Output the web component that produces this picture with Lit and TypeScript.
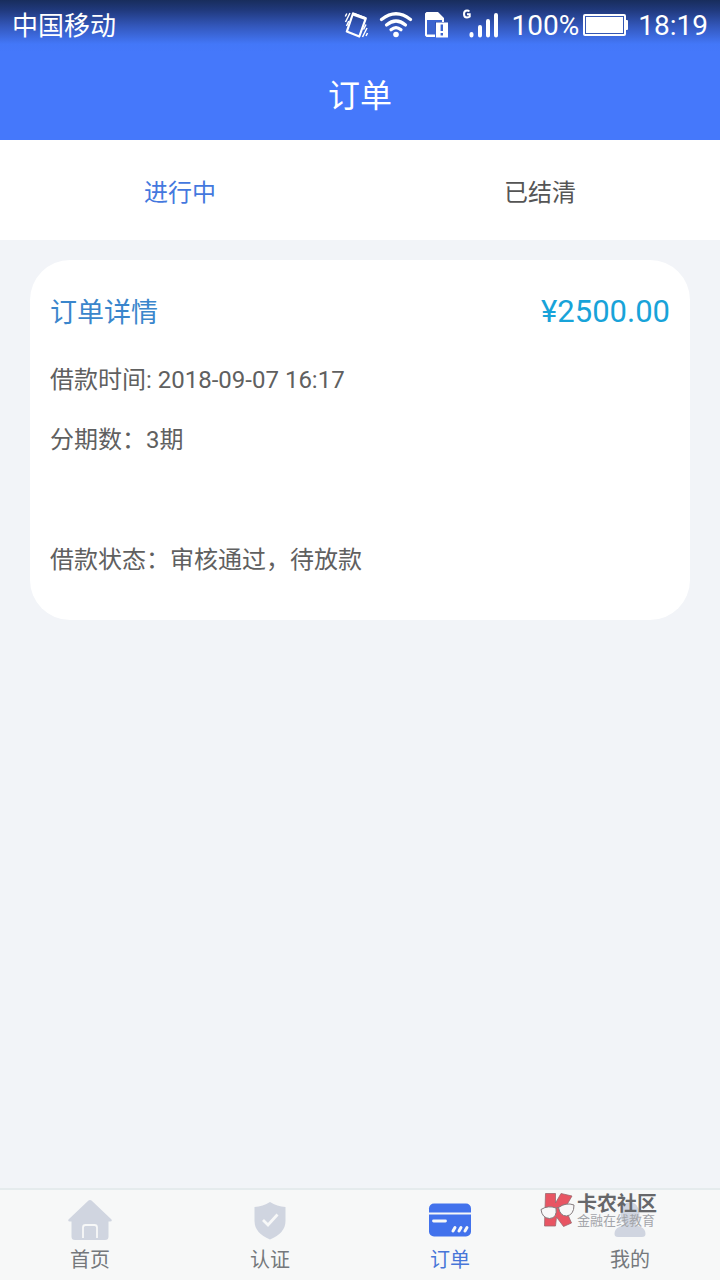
import { LitElement, html, css, svg } from "lit";
import { customElement, state } from "lit/decorators.js";

@customElement("status-bar")
class StatusBar extends LitElement {
  static styles = css`
    :host { display: block; }
    .bar {
      display: flex; align-items: center; justify-content: space-between;
      height: 52px; padding: 0 12px; color: #fff;
      background: linear-gradient(#182d5c 0, #20397c 10px, #3357bb 26px, #4377f8 44px, #4578fb 52px);
    }
    .carrier { font-size: 26px; line-height: 52px; }
    .right { display: flex; align-items: center; font-size: 28px; line-height: 52px; }
    svg { display: block; }
    .battery { margin: 0 9px 0 4px; }
    .icons { margin-right: 13px; }
  `;
  render() {
    return html`
      <div class="bar">
        <span class="carrier">中国移动</span>
        <div class="right">
          <svg class="icons" width="156" height="40" viewBox="343 6 156 40" fill="none" stroke="#fff" aria-hidden="true">
            <path d="M353 13.500L365.800 18.300L359.300 36.500L346.800 31.600Z" stroke-width="2.200" stroke-linejoin="round"/>
            <path d="M353 14L365.500 18.700" stroke-width="3"/>
            <path d="M345.300 16.500l1.500-3M345.500 22l4.500-9M346.500 26l2.300-5M366 36l1.500-3M362.500 37l4.500-9M363.500 29.500l2.500-5" stroke-width="1.500"/>
            <g stroke-width="3.200" stroke-linecap="round">
              <path d="M381.500 19.500Q396 8 410.500 19.500"/>
              <path d="M386.500 25Q396 17 405.500 25"/>
              <path d="M391 29.800Q396 25.500 401 29.800"/>
            </g>
            <circle cx="396" cy="34.500" r="2.800" fill="#fff" stroke="none"/>
            <path d="M425 13.500L426.500 12H438L444 18V22H435V37H426.500L425 35.500Z" fill="#fff" stroke="none"/>
            <path d="M427 20H442V22H435V34.500H427Z" fill="#3b64cf" stroke="none"/>
            <path d="M436 22.500H448V37.500H436Z" fill="#fff" stroke="none"/>
            <path d="M441.800 24.500V31M441.800 33V35.500" stroke="#3b64cf" stroke-width="2.400"/>
            <path d="M469.300 11.500Q468.500 10.500 467 10.500Q464 10.500 464 14Q464 17.500 467 17.500Q469 17.500 469.700 16.700V14.300H467" stroke-width="2"/>
            <g stroke-width="4" stroke-linecap="round">
              <path d="M471.500 34v1.500M480 27v8.500M488 21v14.500M496 15v20.500"/>
            </g>
          </svg>
          <span>100%</span>
          <svg class="battery" width="46" height="24" viewBox="0 0 46 24" aria-hidden="true">
            <rect x="0" y="0" width="43" height="22" rx="2" fill="#fff"/>
            <rect x="42" y="6" width="3" height="10" rx="1" fill="#fff"/>
            <rect x="2.500" y="2.500" width="38" height="17" fill="none" stroke="#3558b4"/>
          </svg>
          <time>18:19</time>
        </div>
      </div>
    `;
  }
}

@customElement("order-card")
class OrderCard extends LitElement {
  static styles = css`
    :host { display: block; }
    .card { background: #fff; border-radius: 40px; padding: 20px 20px 30px; color: #606060; }
    .head { display: flex; align-items: flex-start; justify-content: space-between; line-height: 66px; margin-bottom: 4px; }
    h2 { margin: 0; font-size: 27px; font-weight: 400; color: #3a86cc; }
    .amount { font-size: 31px; line-height: 64px; color: #18a3d9; }
    p { margin: 0; font-size: 24px; line-height: 60px; }
    .status { margin-top: 60px; }
  `;
  render() {
    return html`
      <article class="card">
        <div class="head"><h2>订单详情</h2><span class="amount">¥2500.00</span></div>
        <p>借款时间: 2018-09-07 16:17</p>
        <p>分期数：3期</p>
        <p class="status">借款状态：审核通过，待放款</p>
      </article>
    `;
  }
}

const icons = {
  home: svg`<path d="M22.500 .5Q24 -.5 25.500 .5L45.500 19.500Q46.500 21.500 44 21.500H42.500V36.500Q42.500 40 39 40H9Q5.500 40 5.500 36.500V21.500H4Q1.500 21.500 2.500 19.500Z" fill="#d0d5e0"/><path d="M17 38V27.500Q17 25 19.500 25H28.500Q31 25 31 27.500V38" fill="none" stroke="#f7f8f8" stroke-width="1.800"/>`,
  verify: svg`<path d="M24 2Q31 6.500 39.500 7V21Q39.500 33 24 39.500Q8.500 33 8.500 21V7Q17 6.500 24 2Z" fill="#d0d5e0"/><path d="M17 20L22 25L31.500 14.500" fill="none" stroke="#f7f8f8" stroke-width="2.800"/>`,
  order: svg`<rect x="3" y="3.500" width="42" height="33" rx="5" fill="#4272ec"/><path d="M3 13.500H45" stroke="#f7f8f8" stroke-width="2.200"/><path d="M7.500 21H19.500" stroke="#f7f8f8" stroke-width="2.800" stroke-linecap="round"/><path d="M27 31l2-3.500M33 31l2-3.500M39 31l2-3.500" stroke="#f7f8f8" stroke-width="3" stroke-linecap="round"/>`,
  mine: svg`<ellipse cx="24" cy="14" rx="9.500" ry="12" fill="#d0d5e0"/><path d="M20 22H28Q29 25 35 27Q39.500 29 39.500 34Q39.500 37 36 37H12Q8.500 37 8.500 34Q8.500 29 13 27Q19 25 20 22Z" fill="#d0d5e0"/>`,
};

@customElement("tab-bar")
class TabBar extends LitElement {
  static styles = css`
    :host { display: block; }
    nav { display: grid; grid-template-columns: repeat(4, 1fr); background: #f7f8f8; border-top: 2px solid #e5ebed; }
    a { display: flex; flex-direction: column; align-items: center; gap: 2px; padding: 10px 0 4px; color: #75787c; text-decoration: none; font-size: 20px; line-height: 32px; }
    a[aria-current] { color: #4776d8; }
    svg { display: block; }
  `;
  render() {
    const items = [
      { label: "首页", icon: icons.home },
      { label: "认证", icon: icons.verify },
      { label: "订单", icon: icons.order, current: true },
      { label: "我的", icon: icons.mine },
    ];
    return html`<nav>
      ${items.map((i) => {
        const body = html`<svg width="48" height="42" viewBox="0 0 48 42" aria-hidden="true">${i.icon}</svg><span>${i.label}</span>`;
        return i.current ? html`<a href="#" aria-current="page">${body}</a>` : html`<a href="#">${body}</a>`;
      })}
    </nav>`;
  }
}

@customElement("community-mark")
class CommunityMark extends LitElement {
  static styles = css`
    :host { display: flex; align-items: flex-start; gap: 2px; }
    .name { font-size: 20px; line-height: 22px; font-weight: 700; color: #66676a; }
    .sub { font-size: 13px; line-height: 12px; color: #a3a5aa; }
    .text { display: flex; flex-direction: column; white-space: nowrap; padding-top: 1px; }
    svg { display: block; }
  `;
  render() {
    return html`
      <svg width="35" height="36" viewBox="0 0 35 36" aria-hidden="true">
        <path d="M5.500 1.500H15.500L15.500 11L21 1.500L32 4L25 16L31.500 31L23.500 34.500L16.500 25L15.500 34H4.500Z" fill="#e85563" stroke="#9a6a70" stroke-width=".8"/>
        <path d="M1 17.500Q8 13 16 16Q17.500 26 9.500 26.500Q2 26 1 17.500ZM18.500 15.500Q26 10 34 13Q34 23 26.500 24Q20 24 18.500 15.500Z" fill="#f8f8f8" stroke="#857b7e"/>
        <path d="M16 16.500Q17.500 15 19 15.500" fill="none" stroke="#857b7e"/>
      </svg>
      <div class="text"><span class="name">卡农社区</span><span class="sub">金融在线教育</span></div>
    `;
  }
}

@customElement("app-root")
class AppRoot extends LitElement {
  static styles = css`
    :host {
      display: flex; flex-direction: column; min-height: 100vh; background: #f2f4f8;
      font-family: Roboto, "Noto Sans CJK SC", sans-serif;
    }
    header { background: #4578fb; color: #fff; }
    h1 { margin: 0; font-size: 32px; line-height: 88px; font-weight: 400; text-align: center; }
    .tabs { display: grid; grid-template-columns: 1fr 1fr; background: #fff; }
    .tabs button {
      appearance: none; border: 0; margin: 0; padding: 6px 0 0; background: none;
      font: inherit; font-size: 24px; line-height: 94px; color: #555;
    }
    .tabs button.active { color: #4478de; }
    main { flex: 1; padding: 20px 30px; }
    footer { position: relative; }
    .mark { position: absolute; right: 63px; top: 4px; }
  `;

  @state() tab = 0;

  render() {
    return html`
      <header>
        <status-bar></status-bar>
        <h1>订单</h1>
      </header>
      <div class="tabs" role="tablist">
        ${["进行中", "已结清"].map(
          (t, i) => html`<button role="tab" aria-selected=${this.tab === i ? "true" : "false"}
            class=${this.tab === i ? "active" : ""} @click=${() => (this.tab = i)}>${t}</button>`
        )}
      </div>
      <main>${this.tab === 0 ? html`<order-card></order-card>` : ""}</main>
      <footer>
        <tab-bar></tab-bar>
        <community-mark class="mark"></community-mark>
      </footer>
    `;
  }
}
